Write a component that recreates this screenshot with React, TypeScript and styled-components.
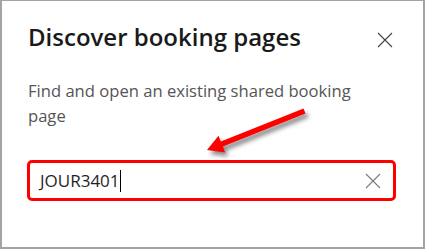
import React from 'react';
import styled, { createGlobalStyle } from 'styled-components';

const GlobalStyle = createGlobalStyle`
  html, body {
    margin: 0;
    padding: 0;
    background: #ffffff;
  }
  body {
    font-family: "Open Sans", "Noto Sans", sans-serif;
  }
`;

const Panel = styled.div`
  position: relative;
  box-sizing: border-box;
  width: 425px;
  height: 249px;
  border: 2px solid #a3a3a3;
  border-top-width: 1px;
  padding: 20px 27px 0 26px;
  background: #fff;
  overflow: hidden;
`;

const Header = styled.div`
  display: flex;
  justify-content: space-between;
  align-items: flex-start;
`;

const Title = styled.h1`
  margin: 0;
  font-size: 24px;
  line-height: 32px;
  font-weight: 600;
  color: #1a1a1a;
`;

const CloseButton = styled.button`
  display: flex;
  align-items: center;
  justify-content: center;
  margin: 11px 3px 0 0;
  padding: 0;
  border: none;
  background: none;
  color: #424242;
`;

const Description = styled.p`
  margin: 25px 0 0;
  font-size: 16.6px;
  line-height: 25px;
  color: #555;
  max-width: 345px;
`;

const SearchBox = styled.div`
  display: flex;
  align-items: center;
  box-sizing: border-box;
  height: 41px;
  margin: 32px 0 0 -1px;
  padding: 0 12px 0 10px;
  border: 3px solid #ff0000;
  border-radius: 5px;
`;

const SearchText = styled.span`
  flex: 1;
  font-size: 17px;
  line-height: 35px;
  color: #1f1f1f;
`;

const Caret = styled.span`
  display: inline-block;
  width: 1px;
  height: 22px;
  vertical-align: -5px;
  background: #000;
`;

const ClearButton = styled.span`
  display: flex;
  color: #7a7a7a;
`;

const Arrow = styled.svg`
  position: absolute;
  left: 0;
  top: 0;
  pointer-events: none;
  filter: drop-shadow(3px 4px 2px rgba(0, 0, 0, 0.45));
`;

const Cross = ({ size }: { size: number }) => (
  <svg width={size} height={size} viewBox="0 0 16 16">
    <path d="M1 1 L15 15 M15 1 L1 15" stroke="currentColor" strokeWidth="1.1" fill="none" />
  </svg>
);

const App = () => {
  return (
    <>
      <GlobalStyle />
      <Panel>
        <Header>
          <Title>Discover booking pages</Title>
          <CloseButton aria-label="Close">
            <Cross size={16} />
          </CloseButton>
        </Header>
        <Description>Find and open an existing shared booking page</Description>
        <SearchBox>
          <SearchText>
            JOUR3401<Caret />
          </SearchText>
          <ClearButton>
            <Cross size={16} />
          </ClearButton>
        </SearchBox>
        <Arrow width="425" height="249" viewBox="0 0 425 249">
          <polygon
            points="301.5,107.5 218.8,140.5 216.5,134.7 205,149 223.2,151.4 220.9,145.5 303.5,112.5"
            fill="#ff0000"
          />
        </Arrow>
      </Panel>
    </>
  );
};

export default App;
